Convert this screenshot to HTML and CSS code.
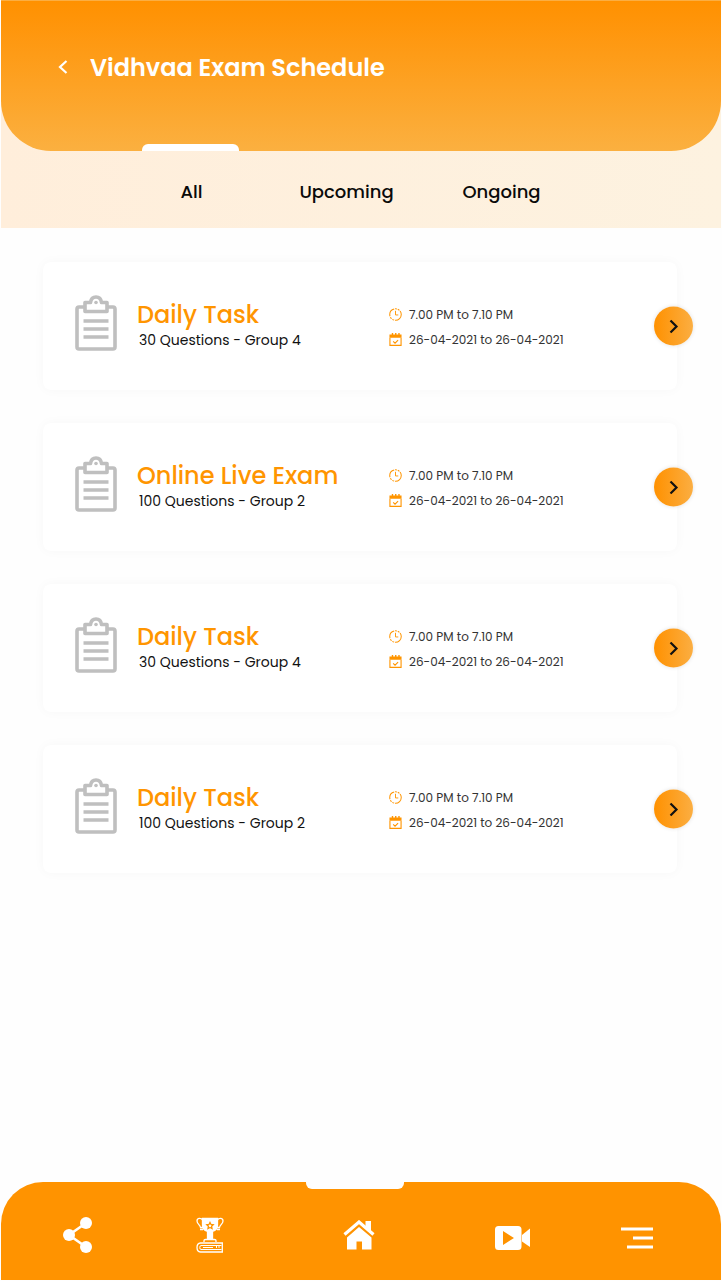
FILE: index.html
```
<!DOCTYPE html>
<html lang="en">
<head>
<meta charset="utf-8">
<meta name="viewport" content="width=device-width, initial-scale=1">
<title>Vidhvaa Exam Schedule</title>
<link rel="stylesheet" href="styles.css">
</head>
<body>
<svg class="sprite" aria-hidden="true">
  <symbol id="clipboard" viewBox="0 0 42 56">
    <g fill="none" stroke="#bfbfbf" stroke-width="3.600" stroke-linejoin="round">
      <path d="M9 12H4Q2 12 2 14V52Q2 54 4 54H38Q40 54 40 52V14Q40 12 38 12H33"/>
      <path d="M10 7.500H15.500C16 3.500 18.500 2 21 2S26 3.500 26.500 7.500H32V16.500H10Z"/>
      <path d="M8.500 26H33.500M8.500 34H33.500M8.500 42H33.500"/>
    </g>
    <circle cx="21" cy="7.500" r="1.800" fill="#bfbfbf"/>
  </symbol>
  <symbol id="clock" viewBox="0 0 14 14">
    <g fill="none" stroke="#ff9500">
      <circle cx="7" cy="7" r="6.200" stroke-width="1.100" stroke-dasharray="10 1 2 1 2 1"/>
      <path d="M7 3V7.500H10"/>
    </g>
  </symbol>
  <symbol id="calendar" viewBox="0 0 14 14">
    <path d="M.5 1.500H3V0H4.500V1.500H6.500V0H8V1.500H10V0H11.500V1.500H13.500V5H.5Z" fill="#ff9500"/>
    <path d="M1 5V13.300H13V5M4.500 9L6.500 11L9.800 7.700" fill="none" stroke="#ff9500" stroke-width="1.200"/>
  </symbol>
  <symbol id="chevron" viewBox="0 0 10 14">
    <path d="M1.500 1L7.500 7L1.500 13" fill="none" stroke="#111" stroke-width="2.200"/>
  </symbol>
</svg>

<div class="app">
  <div class="top">
    <header class="header">
      <button class="back" type="button" aria-label="Back">
        <svg width="12" height="16" viewBox="0 0 12 16"><path d="M9.500 2L3 8L9.500 14" fill="none" stroke="#fff" stroke-width="2.200"/></svg>
      </button>
      <h1 class="heading">Vidhvaa Exam Schedule</h1>
    </header>
    <nav class="tabs" aria-label="Exam filter">
      <button class="tab tab-active" type="button">All</button>
      <button class="tab" type="button">Upcoming</button>
      <button class="tab" type="button">Ongoing</button>
    </nav>
  </div>

  <main class="list">
    <article class="card">
      <svg class="card-icon" aria-hidden="true"><use href="#clipboard"/></svg>
      <div class="card-main">
        <h2 class="card-title">Daily Task</h2>
        <p class="card-sub">30 Questions - Group 4</p>
      </div>
      <div class="card-meta">
        <p class="meta"><svg class="meta-icon" aria-hidden="true"><use href="#clock"/></svg>7.00 PM to 7.10 PM</p>
        <p class="meta"><svg class="meta-icon" aria-hidden="true"><use href="#calendar"/></svg>26-04-2021 to 26-04-2021</p>
      </div>
      <button class="open" type="button" aria-label="Open exam"><svg class="open-icon"><use href="#chevron"/></svg></button>
    </article>
    <article class="card">
      <svg class="card-icon" aria-hidden="true"><use href="#clipboard"/></svg>
      <div class="card-main">
        <h2 class="card-title">Online Live Exam</h2>
        <p class="card-sub">100 Questions - Group 2</p>
      </div>
      <div class="card-meta">
        <p class="meta"><svg class="meta-icon" aria-hidden="true"><use href="#clock"/></svg>7.00 PM to 7.10 PM</p>
        <p class="meta"><svg class="meta-icon" aria-hidden="true"><use href="#calendar"/></svg>26-04-2021 to 26-04-2021</p>
      </div>
      <button class="open" type="button" aria-label="Open exam"><svg class="open-icon"><use href="#chevron"/></svg></button>
    </article>
    <article class="card">
      <svg class="card-icon" aria-hidden="true"><use href="#clipboard"/></svg>
      <div class="card-main">
        <h2 class="card-title">Daily Task</h2>
        <p class="card-sub">30 Questions - Group 4</p>
      </div>
      <div class="card-meta">
        <p class="meta"><svg class="meta-icon" aria-hidden="true"><use href="#clock"/></svg>7.00 PM to 7.10 PM</p>
        <p class="meta"><svg class="meta-icon" aria-hidden="true"><use href="#calendar"/></svg>26-04-2021 to 26-04-2021</p>
      </div>
      <button class="open" type="button" aria-label="Open exam"><svg class="open-icon"><use href="#chevron"/></svg></button>
    </article>
    <article class="card">
      <svg class="card-icon" aria-hidden="true"><use href="#clipboard"/></svg>
      <div class="card-main">
        <h2 class="card-title">Daily Task</h2>
        <p class="card-sub">100 Questions - Group 2</p>
      </div>
      <div class="card-meta">
        <p class="meta"><svg class="meta-icon" aria-hidden="true"><use href="#clock"/></svg>7.00 PM to 7.10 PM</p>
        <p class="meta"><svg class="meta-icon" aria-hidden="true"><use href="#calendar"/></svg>26-04-2021 to 26-04-2021</p>
      </div>
      <button class="open" type="button" aria-label="Open exam"><svg class="open-icon"><use href="#chevron"/></svg></button>
    </article>
  </main>

  <nav class="bottom" aria-label="Main">
    <a class="nav-item" href="#share" aria-label="Share">
      <svg width="30" height="36" viewBox="0 0 30 36" fill="#fff"><path d="M23 6L6 18L23 30" fill="none" stroke="#fff" stroke-width="2.600"/><circle cx="23" cy="6" r="6"/><circle cx="6" cy="18" r="6"/><circle cx="23" cy="30" r="6"/></svg>
    </a>
    <a class="nav-item" href="#awards" aria-label="Awards">
      <svg width="28" height="36" viewBox="0 0 28 36" fill="none" stroke="#fff" stroke-width="1.300">
        <path d="M6.500 1.500H21.500V8C21.500 12 19.500 13.500 16.500 14.500V21.500H11.500V14.500C8.500 13.500 6.500 12 6.500 8Z" fill="#fff"/>
        <path d="M6.500 3C5.500 1 1 .5 1 4C1 7 4 7.500 4.500 10.500H7.500M21.500 3C22.500 1 27 .5 27 4C27 7 24 7.500 23.500 10.500H20.500M4 12.500H7M24 12.500H21"/>
        <path d="M14 5.500L15 7.500L17.200 7.800L15.600 9.300L16 11.500L14 10.400L12 11.500L12.400 9.300L10.800 7.800L13 7.500Z" stroke="#ff9500" fill="#fff"/>
        <path d="M8 25V23.500Q8 22.500 9.500 22.500H18.500Q20 22.500 20 23.500V25M27 26H4.500Q1 26.300 1 30.500T4.500 35H27M26.300 26V35"/>
        <path d="M25.500 28.500H5Q3.800 28.500 3.800 30.500T5 32.500H25.500M7 30.500H17M20.500 28.500V31M23 28.500V31" stroke-width="1"/>
      </svg>
    </a>
    <a class="nav-item nav-active" href="#home" aria-label="Home">
      <svg width="32" height="30" viewBox="0 0 32 30" fill="#fff"><path d="M1.500 14.500L16 2L30.500 14.500" fill="none" stroke="#fff" stroke-width="3.200"/><path d="M22.500 1H28V12L22.500 7Z"/><path d="M4 17.500L16 7L28.500 17.500V29.500H19V21.500H13.500V29.500H4Z"/></svg>
    </a>
    <a class="nav-item nav-low" href="#videos" aria-label="Videos">
      <svg width="36" height="24" viewBox="0 0 36 24" fill="#fff"><path fill-rule="evenodd" d="M3.500 0H23Q26.500 0 26.500 3.500V20.500Q26.500 24 23 24H3.500Q0 24 0 20.500V3.500Q0 0 3.500 0ZM8 5V19L19 12Z"/><path d="M27 9L35 2.500V21L27 15.500Z"/></svg>
    </a>
    <a class="nav-item nav-low" href="#menu" aria-label="Menu">
      <svg width="32" height="22" viewBox="0 0 32 22" fill="none" stroke="#fff" stroke-width="3"><path d="M0 2H32M12 11H32M6 20H32"/></svg>
    </a>
  </nav>
</div>
</body>
</html>
```
FILE: styles.css
```
* { box-sizing: border-box; }

body {
  margin: 0;
  background: #fefefe;
  color: #111;
  font-family: Poppins, Inter, sans-serif;
}

h1, h2, p { margin: 0; font-weight: 500; }

button {
  padding: 0;
  border: 0;
  background: none;
  color: inherit;
  font: inherit;
  cursor: pointer;
}

svg { display: block; }
.sprite { position: absolute; width: 0; height: 0; }

.app {
  display: flex;
  flex-direction: column;
  min-height: 100vh;
  padding: 0 1px 1px;
}

.top { background: linear-gradient(90deg, #ffeedb, #fdf2e0); }

.header {
  display: flex;
  align-items: center;
  gap: 20px;
  height: 151px;
  padding: 0 56px 16px;
  border-top: 1px solid #fbae42;
  border-radius: 0 0 50px 50px;
  background: linear-gradient(#ff9100, #ff9408 12%, #fbb040);
  color: #fff;
}

.back { padding: 0 0 2px; }

.heading {
  padding-left: 1px;
  font-size: 24px;
  line-height: 32px;
  font-weight: 600;
}

.tabs {
  display: grid;
  grid-template-columns: repeat(3, 155px);
  height: 77px;
  padding-left: 113px;
}

.tab {
  position: relative;
  padding-top: 4px;
  color: #0a0a0a;
  font-size: 18px;
  line-height: 28px;
  font-weight: 500;
}

.tab-active::before {
  content: "";
  position: absolute;
  top: -7px;
  left: 28px;
  width: 97px;
  height: 7px;
  border-radius: 6px 6px 0 0;
  background: #fff;
}

.list {
  display: grid;
  gap: 33px;
  padding: 34px 44px 34px 42px;
}

.card {
  position: relative;
  display: grid;
  grid-template-columns: 42px minmax(0, 232fr) minmax(0, 288fr);
  column-gap: 20px;
  align-items: center;
  min-height: 128px;
  padding-left: 32px;
  border-radius: 8px;
  background: #fff;
  box-shadow: 0 0 12px rgba(0, 0, 0, 0.03);
}

.card-icon { width: 42px; height: 56px; margin-bottom: 7px; }

.card-title {
  color: #ff9500;
  font-size: 24px;
  line-height: 28px;
}

.card-sub {
  padding-left: 2px;
  font-size: 14px;
  line-height: 22px;
  font-weight: 400;
}

.card-meta { display: grid; gap: 5px; padding-top: 2px; }

.meta {
  display: flex;
  align-items: center;
  gap: 7px;
  color: #333;
  font-size: 12px;
  line-height: 20px;
  font-weight: 400;
}

.meta-icon { width: 13px; height: 13px; margin-bottom: 1px; }

.open {
  position: absolute;
  top: 50%;
  right: -16px;
  display: grid;
  place-items: center;
  width: 39px;
  height: 39px;
  border-radius: 50%;
  background: linear-gradient(90deg, #ff9100, #fbae42);
  box-shadow: 0 0 4px rgba(0, 0, 0, 0.12);
  transform: translateY(-50%);
}

.open-icon { width: 10px; height: 14px; }

.bottom {
  display: grid;
  grid-template-columns: 132fr 131fr 168fr 140fr 108fr;
  height: 98px;
  margin-top: auto;
  padding: 8px 30px 0 11px;
  border-radius: 42px 42px 0 0;
  background: #ff9300;
}

.nav-item {
  position: relative;
  display: grid;
  place-items: center;
}

.nav-low { padding-top: 6px; }

.nav-active::before {
  content: "";
  position: absolute;
  top: -8px;
  left: 50%;
  width: 98px;
  height: 7px;
  margin-left: -53px;
  border-radius: 0 0 6px 6px;
  background: #fefefe;
}
```
